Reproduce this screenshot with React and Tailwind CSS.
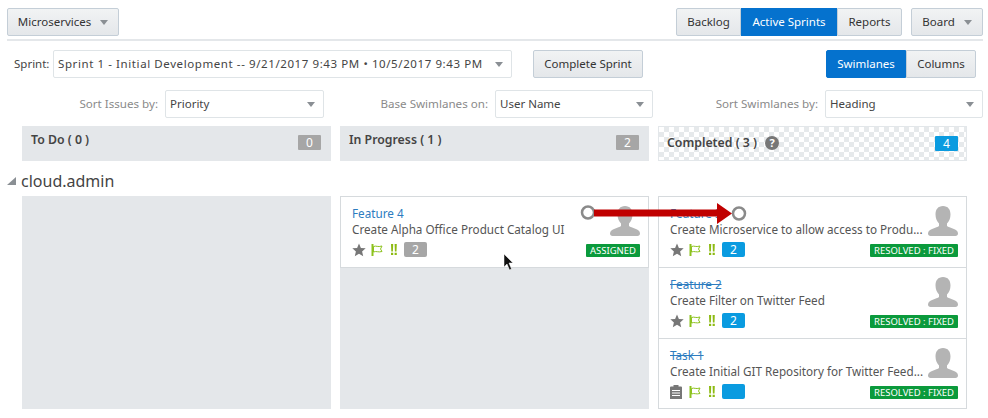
const font = { fontFamily: '"Noto Sans", sans-serif' };

function Caret({ className = 'fill-[#8a8f94]' }) {
    return (
        <svg width="8" height="5" viewBox="0 0 8 5" className={className}>
            <path d="M0 0h8L4 5z" />
        </svg>
    );
}

function Btn({ children, active, className = '' }) {
    const look = active
        ? 'bg-[#0572ce] text-white border-[#0572ce]'
        : 'bg-gradient-to-b from-[#f1f3f4] to-[#e4e7ea] text-[#333] border-[#c4ced7]';
    return (
        <div className={`h-[28px] flex items-center justify-center border text-[11.500px] ${look} ${className}`}>
            {children}
        </div>
    );
}

function Select({ value, className = '' }) {
    return (
        <div className={`h-[28px] flex items-center justify-between pl-[4px] pr-[8px] border border-[#dfe4e7] rounded-[2px] bg-white text-[11.500px] text-[#444] ${className}`}>
            <span>{value}</span>
            <Caret />
        </div>
    );
}

function Avatar() {
    return (
        <svg width="30" height="30" viewBox="0 0 30 30" className="fill-[#b4b4b4]">
            <path d="M15 0c5 0 7.500 3.500 7.500 8.500 0 4-1.500 7-3.500 9v2.500c2 2 11 2.500 11 7.500 0 1.500-1 2.500-2.500 2.500h-25C1 30 0 29 0 27.500 0 22.500 9 22 11 20v-2.500c-2-2-3.500-5-3.500-9C7.500 3.500 10 0 15 0z" />
        </svg>
    );
}

function StarIcon() {
    return (
        <svg width="14" height="14" viewBox="0 0 14 14" className="fill-[#777]">
            <path d="M7 .5l1.900 4.400 4.800.4-3.600 3.200 1.100 4.700L7 10.700l-4.200 2.500 1.100-4.700L.3 5.300l4.800-.4z" />
        </svg>
    );
}

function Flag() {
    return (
        <svg width="12" height="12" viewBox="0 0 12 12" fill="none" className="stroke-[#8dc21f]">
            <path d="M1.500 0v12" strokeWidth="2" />
            <path d="M2.500 2.500c3 -1.200 4 1 8.500 -.5l-1.500 3 1.500 2.500c-4 1.200 -5.500 -.8 -8.500 .5z" strokeWidth="1" />
        </svg>
    );
}

function Priority() {
    return (
        <svg width="6" height="11" viewBox="0 0 6 11" className="fill-[#8dba12]">
            <path d="M0 0h2.200l-.3 7.500H.3zM3.600 0h2.200l-.3 7.500H3.900zM0 8.800h2.200V11H0zM3.600 8.800h2.200V11H3.600z" />
        </svg>
    );
}

function Clipboard() {
    return (
        <svg width="12" height="14" viewBox="0 0 12 14" className="fill-[#777]">
            <path d="M3.500 0h5v1.500H11a1 1 0 0 1 1 1V14H0V2.500a1 1 0 0 1 1-1h2.500zM2 5v1h8V5zm0 2.500v1h8v-1zM2 10v1h8v-1z" />
        </svg>
    );
}

function Card({ link, title, done, points, status, task, last, pointsBlue }) {
    return (
        <div className={`pl-[11px] pr-[9px] pt-[8px] bg-white relative ${last ? 'flex-1' : 'h-[71px] shrink-0 border-b border-[#d6dadd]'}`}>
            <div className={`text-[11.700px] leading-[16px] text-[#2d7cbf] ${done ? 'line-through' : ''}`}>{link}</div>
            <div className="text-[11.700px] leading-[16px] text-[#555] whitespace-nowrap">{title}</div>
            <div className="flex items-center mt-[5px] h-[15px]">
                <div className="w-[19px] flex">
                    {task ? <Clipboard /> : <StarIcon />}
                </div>
                <Flag />
                <div className="ml-[8px] mr-[7px] flex"><Priority /></div>
                <div className={`w-[23px] h-[15px] rounded-[2px] flex items-center justify-center text-[12px] text-white ${pointsBlue ? 'bg-[#0a9be0]' : 'bg-[#a6a6a6]'}`}>
                    {points}
                </div>
            </div>
            <div className="absolute right-[8px] top-[9px]"><Avatar /></div>
            <div className="absolute right-[8px] top-[47px] h-[13px] px-[4px] rounded-[1px] bg-[#0b9a3c] text-white text-[9.500px] leading-[13px]">
                {status}
            </div>
        </div>
    );
}

function ColumnHead({ label, count, blue, checker }) {
    return (
        <div className={`h-[35px] flex justify-between ${checker ? 'pl-[8px] pr-[8px] bg-[repeating-conic-gradient(#e6e9eb_0_25%,#fff_0_50%)] bg-[length:10px_10px] border border-[#e3e7ea]' : 'pl-[9px] pr-[10px] bg-[#e4e7ea]'}`}>
            {label}
            <div className={`mt-[9px] w-[23px] h-[15px] rounded-[1px] flex items-center justify-center text-[12px] text-white ${blue ? 'bg-[#0a9be0]' : 'bg-[#a6a6a6]'}`}>
                {count}
            </div>
        </div>
    );
}

export default function App() {
    return (
        <div style={font} className="w-[988px] h-[418px] bg-white overflow-hidden relative">
            {/* top bar */}
            <div className="ml-[7px] mr-[5px] pt-[8px] pb-[3px] flex justify-between border-b-2 border-[#e4e7ea]">
                <Btn className="w-[112px] rounded-[2px] gap-[9px]">
                    Microservices <Caret />
                </Btn>
                <div className="flex">
                    <Btn className="w-[65px] rounded-l-[2px]">Backlog</Btn>
                    <Btn active className="w-[96px]">Active Sprints</Btn>
                    <Btn className="w-[65px] rounded-r-[2px] mr-[9px]">Reports</Btn>
                    <Btn className="w-[72px] rounded-[2px] gap-[9px]">
                        Board <Caret />
                    </Btn>
                </div>
            </div>

            {/* sprint row */}
            <div className="flex items-center mt-[9px] pl-[14px] pr-[12px]">
                <span className="w-[39px] text-[11.500px] text-[#444]">Sprint:</span>
                <Select className="w-[459px] tracking-[0.59px]" value="Sprint 1 - Initial Development -- 9/21/2017 9:43 PM • 10/5/2017 9:43 PM" />
                <Btn className="w-[110px] ml-[21px] rounded-[2px]">Complete Sprint</Btn>
                <div className="flex ml-auto">
                    <Btn active className="w-[80px] rounded-l-[2px]">Swimlanes</Btn>
                    <Btn className="w-[70px] rounded-r-[2px]">Columns</Btn>
                </div>
            </div>

            {/* sort row */}
            <div className="flex items-center mt-[12px] pr-[5px] text-[11.600px] text-[#8a8a8a]">
                <span className="w-[158px] text-right">Sort Issues by:</span>
                <Select className="w-[159px] ml-[7px]" value="Priority" />
                <span className="w-[164px] text-right">Base Swimlanes on:</span>
                <Select className="w-[158px] ml-[7px]" value="User Name" />
                <span className="w-[165px] text-right">Sort Swimlanes by:</span>
                <Select className="w-[158px] ml-[7px]" value="Heading" />
            </div>

            {/* column heads */}
            <div className="grid grid-cols-[309px_309px_309px] gap-[9px] pl-[22px] mt-[8px]">
                <ColumnHead count="0" label={<span className="mt-[5px] text-[12.300px] font-semibold text-[#444]">To Do ( 0 )</span>} />
                <ColumnHead count="2" label={<span className="mt-[5px] text-[12.300px] font-semibold text-[#444]">In Progress ( 1 )</span>} />
                <ColumnHead
                    checker
                    blue
                    count="4"
                    label={
                        <span className="mt-[7px] h-[18px] flex items-center gap-[8px] text-[12.300px] font-semibold text-[#444]">
                            Completed ( 3 )
                            <span className="w-[14px] h-[14px] rounded-full bg-[#777] text-white text-[11px] font-bold flex items-center justify-center">?</span>
                        </span>
                    }
                />
            </div>

            {/* swimlane heading */}
            <div className="flex items-center pl-[7px] h-[35px] pt-[4px] text-[#444]">
                <svg width="10" height="10" viewBox="0 0 10 10" className="fill-[#8a8f94] mr-[4px]">
                    <path d="M9 1v8H0z" />
                </svg>
                <span className="text-[16px]">cloud.admin</span>
            </div>

            {/* swimlane */}
            <div className="grid grid-cols-[309px_309px_309px] gap-[9px] pl-[22px] h-[213px]">
                <div className="bg-[#e4e7ea]" />
                <div className="bg-[#e4e7ea]">
                    <div className="border border-[#d6dadd] h-[72px] flex flex-col">
                        <Card last link="Feature 4" title="Create Alpha Office Product Catalog UI" points="2" status="ASSIGNED" />
                    </div>
                </div>
                <div className="border border-[#d6dadd] flex flex-col">
                    <Card done pointsBlue link="Feature 3" title="Create Microservice to allow access to Produ..." points="2" status="RESOLVED : FIXED" />
                    <Card done pointsBlue link="Feature 2" title="Create Filter on Twitter Feed" points="2" status="RESOLVED : FIXED" />
                    <Card done last task pointsBlue link="Task 1" title="Create Initial GIT Repository for Twitter Feed..." points="" status="RESOLVED : FIXED" />
                </div>
            </div>

            {/* annotation arrow */}
            <svg width="170" height="26" viewBox="0 0 170 26" className="absolute left-[579px] top-[201px]">
                <circle cx="9" cy="11.500" r="6" fill="#fff" stroke="#8a8a8a" strokeWidth="2.500" />
                <circle cx="160" cy="12.500" r="6" fill="#fff" stroke="#8a8a8a" strokeWidth="2.500" />
                <path d="M15 8.500h123V2l15 10.500-15 10.500v-7.500H15z" fill="#c00000" />
            </svg>

            {/* mouse cursor */}
            <svg width="11" height="17" viewBox="0 0 11 17" className="absolute left-[503px] top-[254px]">
                <path d="M1 0l9 9H6l2.500 6-2 1L4 10l-3 3z" fill="#111" stroke="#fff" strokeWidth=".5" />
            </svg>
        </div>
    );
}
